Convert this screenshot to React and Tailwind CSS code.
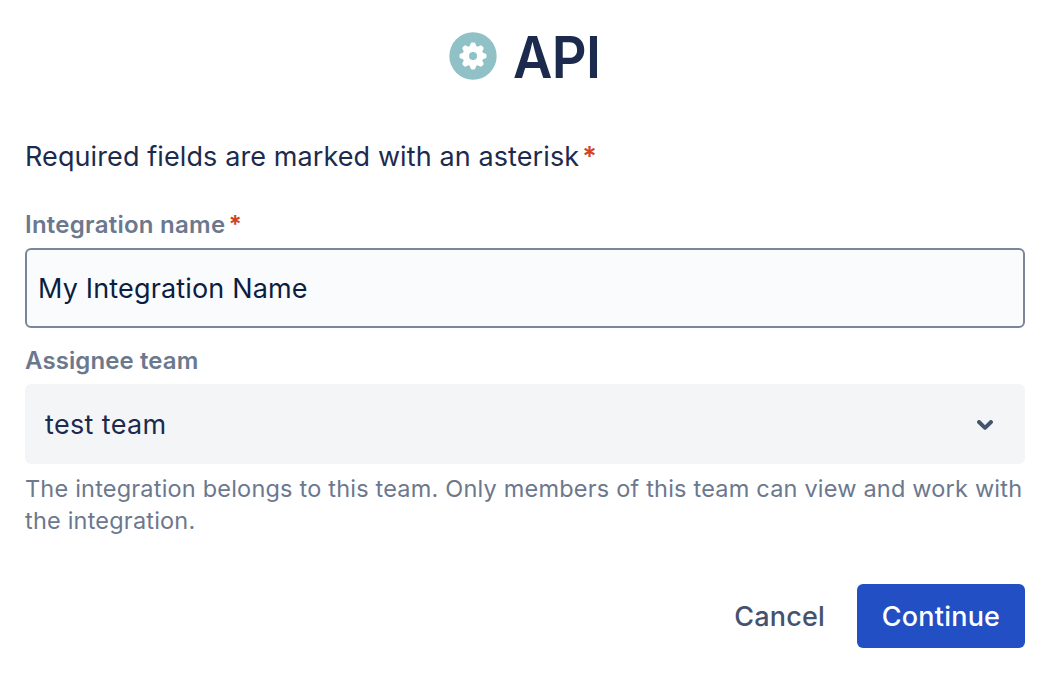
const TEETH = [0, 45, 90, 135, 180, 225, 270, 315];

function GearBadge() {
  return (
    <svg className="size-12 shrink-0" viewBox="-24 -24 48 48" aria-hidden="true">
      <circle r="23.7" fill="#8fc1c6" />
      <g fill="#fff">
        <circle r="10.2" />
        {TEETH.map((angle) => (
          <path
            key={angle}
            d="M-3.7 -9L-2.3 -12.6Q-1.9 -13.5 -1 -13.5H1Q1.9 -13.5 2.3 -12.6L3.7 -9Z"
            transform={`rotate(${angle})`}
          />
        ))}
      </g>
      <circle r="4" fill="#8fc1c6" />
    </svg>
  );
}

function Asterisk({ className }) {
  return <span className={`text-[#d04424] ${className}`}>*</span>;
}

export default function App() {
  return (
    <main className="h-[690px] w-[1062px] bg-white pl-[25px] pr-[37px] pt-6 font-['Inter',sans-serif] text-[#1c2b4d]">
      <header className="flex h-16 items-center justify-center gap-4 pr-0.5">
        <GearBadge />
        <h1 className="w-[87px] origin-left scale-x-[0.94] pt-0.5 text-[57.5px] font-semibold leading-16 tracking-[-0.6px]">API</h1>
      </header>

      <p className="mt-12 flex h-10 items-center whitespace-nowrap pt-0.5 text-[27px] leading-10 tracking-[0.1px]">
        <span>Required fields are marked with an asterisk</span>
        <Asterisk className="ml-[3px] font-semibold" />
      </p>

      <label htmlFor="name" className="mt-8 flex h-8 items-center pt-0.5 text-2xl font-semibold leading-8 tracking-[0.26px] text-[#6c788d]">
        <span>Integration name</span>
        <Asterisk className="ml-[3px] font-bold" />
      </label>
      <input
        id="name"
        defaultValue="My Integration Name"
        className="mt-2 block h-20 w-full rounded-md border-2 border-[#7b869b] bg-[#fafbfd] pl-[11px] pr-3 text-[27px] tracking-[0.16px] text-[#0b1e42] outline-none"
      />

      <div className="mt-4 flex h-8 items-center pt-0.5 text-2xl font-semibold leading-8 tracking-[0.1px] text-[#6c788d]">
        <span>Assignee team</span>
      </div>
      <button type="button" className="mt-2 flex h-20 w-full items-center justify-between rounded-md bg-[#f4f5f7] pl-5 pr-8 pt-0.5">
        <span className="text-[27px] tracking-[0.35px]">test team</span>
        <svg className="h-[10px] w-4" viewBox="0 0 16 10" fill="none" aria-hidden="true">
          <path d="M2 2L8 7.8L14 2" stroke="#44546f" strokeWidth="3.9" strokeLinecap="round" strokeLinejoin="round" />
        </svg>
      </button>
      <p className="mt-[9px] whitespace-nowrap text-[23.5px] leading-8 tracking-[0.2px] text-[#6c788d]">
        <span>The integration belongs to this team. Only members of this team can view and work with</span>
        <br />
        <span>the integration.</span>
      </p>

      <footer className="mt-[47px] flex h-16 items-center justify-end gap-8 text-[27px] font-medium tracking-[0.2px]">
        <button type="button" className="pt-0.5 text-[#44526d]">Cancel</button>
        <button type="button" className="h-16 w-[168px] rounded-md bg-[#2250c4] pt-0.5 text-white">Continue</button>
      </footer>
    </main>
  );
}
